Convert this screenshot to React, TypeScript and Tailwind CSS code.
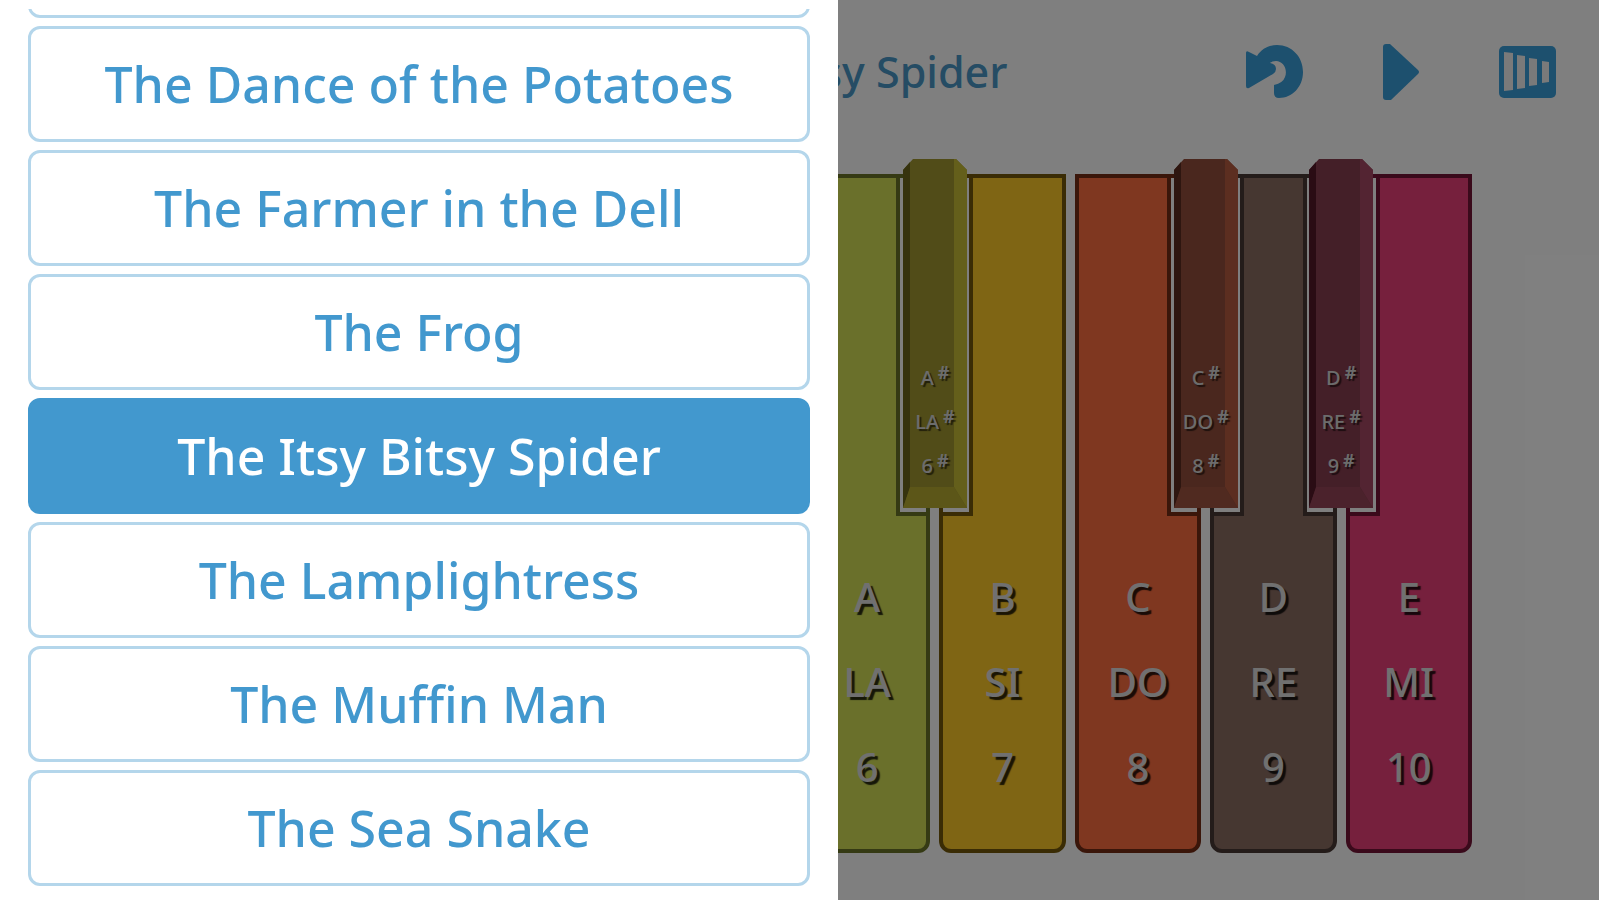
const songs = [
  "The Dance of the Potatoes",
  "The Farmer in the Dell",
  "The Frog",
  "The Itsy Bitsy Spider",
  "The Lamplightress",
  "The Muffin Man",
  "The Sea Snake",
];

const current = "The Itsy Bitsy Spider";

type Sharp = { face: string; left: string; right: string; foot: string };
type Note = {
  letter: string;
  solfege: string;
  number: number;
  fill: string;
  edge: string;
  afterSharp?: boolean;
  sharp?: Sharp;
};

const notes: Note[] = [
  { letter: "A", solfege: "LA", number: 6, fill: "bg-[#d4e157]", edge: "border-[#6a7428]", afterSharp: true, sharp: { face: "#a29830", left: "#6c661c", right: "#c8be36", foot: "#b8ac30" } },
  { letter: "B", solfege: "SI", number: 7, fill: "bg-[#ffca28]", edge: "border-[#74590a]", afterSharp: true },
  { letter: "C", solfege: "DO", number: 8, fill: "bg-[#ff6e40]", edge: "border-[#742c14]", sharp: { face: "#944f3c", left: "#5c2c20", right: "#b85c40", foot: "#a05440" } },
  { letter: "D", solfege: "RE", number: 9, fill: "bg-[#8d6e63]", edge: "border-[#483834]", afterSharp: true, sharp: { face: "#893e50", left: "#541828", right: "#a64864", foot: "#964458" } },
  { letter: "E", solfege: "MI", number: 10, fill: "bg-[#ec407a]", edge: "border-[#741436]", afterSharp: true },
];

function SharpLabel({ text }: { text: string | number }) {
  return (
    <span className="flex items-start justify-center gap-1">
      <span className="pt-2">{text}</span>
      <span className="pt-1 text-lg leading-5 font-bold">#</span>
    </span>
  );
}

function SharpKey({ note, sharp }: { note: Note; sharp: Sharp }) {
  return (
    <button
      type="button"
      className="absolute -top-4 left-[94px] z-10 h-[355px] w-[74px] px-[5px] pb-[5px]"
    >
      <svg viewBox="0 0 64 350" preserveAspectRatio="none" className="h-full w-full" aria-hidden="true">
        <path d="M0 12 L10 1 H53 L64 12 V350 H0 Z" fill={sharp.face} />
        <path d="M0 12 L7 4 V330 L0 350 Z" fill={sharp.left} />
        <path d="M51 1 H53 L64 12 V350 L51 329 Z" fill={sharp.right} />
        <path d="M7 329 H51 L64 350 H0 Z" fill={sharp.foot} />
      </svg>
      <span className="absolute inset-x-0 top-[200px] flex flex-col gap-3 text-[20px] leading-6 font-medium text-[#d8d8d8] [text-shadow:2px_2px_1px_#0009]">
        <SharpLabel text={note.letter} />
        <SharpLabel text={note.solfege} />
        <SharpLabel text={note.number} />
      </span>
    </button>
  );
}

function PianoKey({ note }: { note: Note }) {
  return (
    <li className={`relative ${note.number === 6 ? "col-start-6" : ""}`}>
      <button
        type="button"
        className={`relative flex h-[679px] w-full flex-col justify-end overflow-hidden rounded-b-xl border-4 pb-10 text-center text-[40px] leading-[85px] font-medium text-[#e0e0e0] [text-shadow:3px_3px_1px_#000c] ${note.fill} ${note.edge}`}
      >
        {note.afterSharp && (
          <span className={`absolute -top-1 -left-1 h-[342px] w-[34px] border-r-4 border-b-4 bg-white ${note.edge}`} />
        )}
        {note.sharp && (
          <span className={`absolute -top-1 -right-1 h-[342px] w-[34px] border-b-4 border-l-4 bg-white ${note.edge}`} />
        )}
        <span>{note.letter}</span>
        <span>{note.solfege}</span>
        <span>{note.number}</span>
      </button>
      {note.sharp && <SharpKey note={note} sharp={note.sharp} />}
    </li>
  );
}

function UndoIcon() {
  return (
    <svg viewBox="0 0 58 56" className="h-14 w-[58px]" fill="currentColor" aria-hidden="true">
      <path d="M1 9 Q1 6 4 8 L12 12 C17 4 25 1 32 1 C47 1 58 13 58 28 C58 43 47 54 34 54 Q29 54 29 49 V41 Q38 39 40 33 C43 25 38 17 31 17 Q27 17 25 19 Q31 20 31 25 Q31 28 28 30 L4 44 Q1 45 1 42 Z" />
    </svg>
  );
}

function PlayIcon() {
  return (
    <svg viewBox="0 0 36 58" className="h-[58px] w-9" fill="currentColor" aria-hidden="true">
      <path d="M0 4 Q0 1 3 1 H7 L35 27 Q37 29 35 31 L8 57 H3 Q0 57 0 54 Z" />
    </svg>
  );
}

function XylophoneIcon() {
  return (
    <svg viewBox="0 0 57 52" className="h-[52px] w-[57px]" aria-hidden="true">
      <rect width="57" height="52" rx="5" fill="currentColor" />
      <g fill="#f4f4f4">
        <path d="M5 6 L14 7 V44 L5 45 Z" />
        <path d="M18 9 L26 10 V42 L18 43 Z" />
        <path d="M30 12 L38 13 V39 L30 40 Z" />
        <path d="M43 15 L50 16 V36 L43 37 Z" />
      </g>
    </svg>
  );
}

export default function App() {
  return (
    <div className="relative h-screen overflow-hidden bg-white font-['Noto_Sans',sans-serif]">
      <main className="h-full">
        <header className="relative flex h-36 items-center justify-end pr-[43px] text-[#3ba0dc]">
          <h1 className="absolute inset-x-0 text-center text-[43px] leading-[60px] font-medium whitespace-nowrap text-[#4a98c8]">
            {current}
          </h1>
          <nav className="relative flex items-center gap-20">
            <button type="button" aria-label="Restart"><UndoIcon /></button>
            <button type="button" aria-label="Play"><PlayIcon /></button>
            <button type="button" aria-label="Instrument"><XylophoneIcon /></button>
          </nav>
        </header>
        <ul className="grid grid-cols-10 gap-[9px] px-[127px] pt-[30px]">
          {notes.map((note) => (
            <PianoKey key={note.number} note={note} />
          ))}
        </ul>
      </main>

      <div className="absolute inset-0 z-20 bg-black/50" />

      <aside className="absolute inset-y-0 left-0 z-30 w-[838px] bg-white px-7 pt-[9px]">
        <div className="h-full overflow-hidden">
          <ul className="-mt-[107px] flex flex-col gap-2">
            <li>
              <button
                type="button"
                aria-label="Previous song"
                className="block h-[116px] w-full rounded-xl border-3 border-[#b4d6eb] bg-white"
              />
            </li>
            {songs.map((song) => (
              <li key={song}>
                <button
                  type="button"
                  className={
                    song === current
                      ? "block h-[116px] w-full rounded-xl border-3 border-[#4298ce] bg-[#4298ce] text-[50px] leading-[60px] font-medium text-white"
                      : "block h-[116px] w-full rounded-xl border-3 border-[#b4d6eb] bg-white text-[50px] leading-[60px] font-medium text-[#4298ce]"
                  }
                >
                  {song}
                </button>
              </li>
            ))}
          </ul>
        </div>
      </aside>
    </div>
  );
}
